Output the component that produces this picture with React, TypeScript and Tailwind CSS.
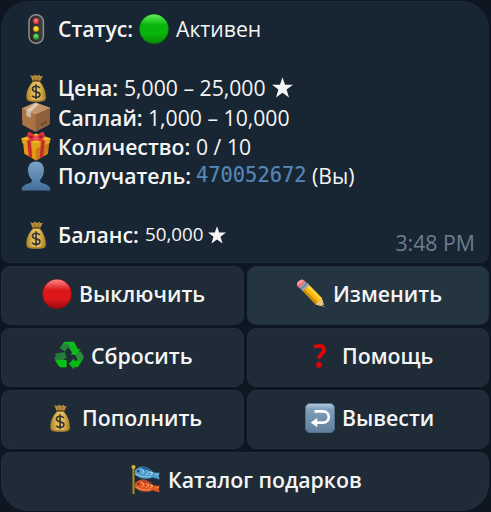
import type { ReactNode } from "react";

function TrafficLight() {
  return (
    <svg width="30" height="30" viewBox="0 0 30 30">
      <defs>
        <linearGradient id="tl" x1="0" x2="1"><stop offset="0" stopColor="#242424" /><stop offset="1" stopColor="#424242" /></linearGradient>
      </defs>
      <rect x="8" y="0.7" width="14.4" height="28.6" rx="7" fill="url(#tl)" stroke="#8e8e8e" strokeWidth="1.5" />
      <circle cx="15" cy="7" r="2.9" fill="#e94048" /><circle cx="15" cy="6.4" r="1.3" fill="#ff8086" />
      <circle cx="15" cy="14.8" r="2.9" fill="#f3b800" /><circle cx="15" cy="14.2" r="1.3" fill="#ffe16b" />
      <circle cx="15" cy="22.5" r="2.9" fill="#2eb23a" /><circle cx="15" cy="21.9" r="1.3" fill="#78df72" />
    </svg>
  );
}

function Ball({ id, stops }: { id: string; stops: [string, string, string] }) {
  return (
    <svg width="30" height="30" viewBox="0 0 30 30">
      <defs>
        <linearGradient id={id} x1="0" y1="0" x2="0" y2="1">
          <stop offset="0" stopColor={stops[0]} /><stop offset="0.38" stopColor={stops[1]} /><stop offset="0.68" stopColor={stops[1]} /><stop offset="1" stopColor={stops[2]} />
        </linearGradient>
      </defs>
      <circle cx="15" cy="15" r="14.7" fill={stops[2]} />
      <ellipse cx="15" cy="14.7" rx="13.9" ry="14.1" fill={`url(#${id})`} />
    </svg>
  );
}

function MoneyBag() {
  return (
    <svg width="30" height="30" viewBox="0 0 30 30">
      <defs>
        <linearGradient id="bag" x1="0" x2="1">
          <stop offset="0" stopColor="#a67c22" /><stop offset="0.3" stopColor="#dfb54f" /><stop offset="0.6" stopColor="#e8c365" /><stop offset="1" stopColor="#a97a1c" />
        </linearGradient>
      </defs>
      <path d="M9.2 2.3 12.4 3 14 1.5 16 3 18.4 1.7 19.5 3.2 21.9 2.8 19 8.6H12Z" fill="#b88c3c" />
      <path d="m13.3 3.6.8 4.3M17.7 3.4l-.9 4.5" stroke="#7e5b20" strokeWidth=".7" />
      <path d="M12 8.7c-3.6 3.1-6.4 8.6-6.7 14.2-.1 3 .8 5 3.2 5.3 4 .5 9.6.5 13.5 0 2.2-.3 3-2.3 2.9-5-.3-5.4-2.8-11.3-6.2-14.5Z" fill="url(#bag)" />
      <path d="M6 25.7c5 1.7 13.4 1.8 18.4 0-.5 1.6-1.1 2.2-2.3 2.4-4.3.5-9.4.5-13.7 0-1.3-.3-2-.9-2.4-2.4Z" fill="#a47921" opacity=".75" />
      <path d="M11.7 8.1q3.6-1.3 7.2 0" fill="none" stroke="#73521b" strokeWidth="1.3" strokeLinecap="round" />
      <path d="M18.8 14.9c-1-1.2-2.1-1.6-3.7-1.6-2.2 0-3.6 1-3.6 2.7 0 4 7.4 1.7 7.4 5.6 0 1.8-1.4 2.9-3.8 2.9-1.7 0-3-.5-4.1-1.7M15.1 11.2v15.1" fill="none" stroke="#343332" strokeWidth="1.6" />
    </svg>
  );
}

function Package() {
  return (
    <svg width="30" height="30" viewBox="0 0 30 30">
      <path d="M1 6.2 14.6.5 29 5.7 28.4 22.4 14.5 29.8 1.6 22.8Z" fill="#b88255" />
      <path d="M1 6.2 14.3 12.4 14.5 29.8 1.6 22.8Z" fill="#a97345" />
      <path d="M14.3 12.4 29 5.7 28.4 22.4 14.5 29.8Z" fill="#8f6039" />
      <path d="M1 6.2 14.6.5 29 5.7 14.3 12.4Z" fill="#c59468" />
      <path d="M7.3 3.7 10.4 2.4 17.8 10.8V16l-3.4 1.6v-5.2Z" fill="none" />
      <path d="M14.3 1.1 18 2 9.6 9.9v5.8l-4-2V8Z" fill="#decbb7" />
      <path d="m5.6 8 4 1.9v5.8l-4-2Z" fill="#cbb59e" />
      <path d="m20.1 21.2 2.2-1.1v2.8l-2.2 1.1Zm3.5-1.8 2-1v2.8l-2 1Z" fill="#664327" />
    </svg>
  );
}

function Gift() {
  return (
    <svg width="30" height="30" viewBox="1 0 30 30">
      <path d="M3 10.3 16 15.1 29 10.3 27.9 22.7 16 29.6 4.3 22.7Z" fill="#e49a14" />
      <path d="M16 14v15.6l11.9-6.9L29 10Z" fill="#c97d14" />
      <path d="m1.4 7.2 14.6-4.8 14.6 4.8-1.1 4.7L16 17.2 2.5 11.9Z" fill="#f1b920" />
      <path d="m1.4 7.2 14.6 5.3 14.6-5.3-1.1 4.7L16 17.2 2.5 11.9Z" fill="#dfa31a" />
      <path d="m7 9.2 4 1.5 1.3 16.8-3.5-2.1Zm18 0-4 1.5-1.3 16.8 3.5-2.1Z" fill="#cb2931" />
      <path d="m7 9.2 17-5 2 .7L11 10.7Zm18 0L8 4.6l-2 .7 15 5.4Z" fill="#d9363d" />
      <path d="M15.8 6.8C13.5 2.1 10 0 8.1 1.3 6.9 3 7.6 6.8 9 8.3c2 .9 5.4-.2 6.8-1.5Z" fill="#dd333d" />
      <path d="M16.2 6.8C18.5 2.1 22 0 23.9 1.3c1.2 1.7.5 5.5-.9 7-2 .9-5.4-.2-6.8-1.5Z" fill="#dd333d" />
      <path d="M14 6.2C11.7 4.5 9.8 4 9.2 5c-.2 1.3.5 2.3 1.5 2.1Zm4 0C20.3 4.5 22.2 4 22.8 5c.2 1.3-.5 2.3-1.5 2.1Z" fill="#9f1d2b" />
      <rect x="13.6" y="4.8" width="4.9" height="4.7" rx="1.6" fill="#f04b52" />
    </svg>
  );
}

function Person() {
  return (
    <svg width="30" height="30" viewBox="0 0 30 30">
      <defs><linearGradient id="person" x1="0" y1="0" x2="0" y2="1"><stop offset="0" stopColor="#7ba3c8" /><stop offset="1" stopColor="#426f99" /></linearGradient></defs>
      <path d="M15 .5c-5.5 0-8.4 4-7.9 9.4.2 3.9 1.6 6.6 3.5 8.5.8 2.1-.2 3-2.1 3.8C3.6 23.6.8 24.8.5 29.5h29c-.3-4.7-3.1-5.9-8-7.3-1.9-.8-2.9-1.7-2.1-3.8 1.9-1.9 3.3-4.6 3.5-8.5C23.4 4.5 20.5.5 15 .5Z" fill="url(#person)" />
    </svg>
  );
}

function Star({ size }: { size: number }) {
  return (
    <svg width={size} height={size} viewBox="0 0 20 20"><path d="m10 .3 2.4 7H20l-6.1 4.6 2.3 7.6L10 15l-6.2 4.5 2.3-7.6L0 7.3h7.6Z" fill="#f5f5f5" /></svg>
  );
}

function Pencil() {
  return (
    <svg width="30" height="30" viewBox="0 0 30 30">
      <path d="m11 4.1 14.8 15 2.6 8.7-8.7-2.4L4.7 9.8Z" fill="#f4b80b" />
      <path d="m11 4.1 14.8 15-2 1.8L9 6Z" fill="#ffd43d" />
      <path d="M6.4 8.2 21.4 23.6l-1.7 1.8L4.7 9.8Z" fill="#cc8a0a" />
      <path d="m25.8 19.1 2.6 8.7-8.7-2.4Z" fill="#e7c58e" />
      <path d="m27.6 25.3.8 2.5-2.6-.8Z" fill="#453e38" />
      <path d="m9 2.2 4 4-6.2 5.8-4-4Z" fill="#8fa3b5" />
      <path d="m11 4.2-6.2 5.8" stroke="#56697f" strokeWidth=".9" />
      <path d="M9.5 2.7 7.7 1.1C5-.9-.6 3.9 1.2 7l2 2Z" fill="#e9727b" />
      <path d="M7.5 1.2C5-.5.8 3.3 1 5.5 3 5.5 6.5 3.5 7.5 1.2Z" fill="#f59fa2" />
    </svg>
  );
}

function Recycle() {
  return (
    <svg width="30" height="30" viewBox="0 0 30 30">
      <path d="M7 6.2 9.3 2q.8-1.2 2.3-1.2h8.3l4.3 7.6 2-1-2.4 7.1-7.7-1.2 2.2-1.3L13.8 5 11 10.1 5.6 7Z" fill="#12b91c" />
      <path d="m5.9 7 1.6-2.5L12.7 2l2.8 2.8-4.4 6Z" fill="#28833a" />
      <path d="m3.2 12.2 7.6-1.2 2.4 7-2-1-4 6.8H3.6L.8 18.5q-.6-1.2.1-2.4l1.3-2.2-1.9-.9Z" fill="#247d36" />
      <path d="m1.2 18.8 6 .1h5.5v7.3H7.1q-1.7 0-2.5-1.3Z" fill="#09bf13" />
      <path d="m21.2 13.7 5.4-3.1 2.6 4.5q.7 1.2 0 2.4l-4.5 7.5q-.8 1.3-2.3 1.3h-2.5v2.2l-5-5.7 5-5.6v2.4h4.1Z" fill="#08b612" />
      <path d="m21.2 13.7 5.4-3.1 2.6 4.5q.7 1.2 0 2.4l-1 1.8-5-2.2Z" fill="#2c8b3d" />
    </svg>
  );
}

function Question() {
  return (
    <svg width="30" height="30" viewBox="0 0 30 30"><path d="M9.2 6.2c1.4-1 3-1.3 4.9-1.3 3.2 0 4.9 1.4 4.9 3.8 0 4-5.2 4.7-4.7 9" fill="none" stroke="#df0709" strokeWidth="3.9" /><circle cx="14" cy="23.8" r="2.9" fill="#df0709" /></svg>
  );
}

function ReturnArrow() {
  return (
    <svg width="30" height="30" viewBox="0 0 30 30">
      <defs><linearGradient id="key" x1="0" y1="0" x2="0" y2="1"><stop offset="0" stopColor="#b5cce0" /><stop offset=".2" stopColor="#809fbb" /><stop offset="1" stopColor="#607f9d" /></linearGradient></defs>
      <rect x=".5" y=".5" width="29" height="29" rx="4.5" fill="url(#key)" stroke="#536f8b" />
      <path d="M9.5 8.4H18c7.7 0 7.7 11.2 0 11.2h-7" fill="none" stroke="white" strokeWidth="2.6" />
      <path d="m5.7 19.6 6.5-4.7v9.4Z" fill="white" />
    </svg>
  );
}

function FishFlags() {
  return (
    <svg width="30" height="30" viewBox="0 0 30 30">
      <path d="M2.5 2v27" stroke="#af8a1c" strokeWidth="2" /><circle cx="2.5" cy="2" r="2" fill="#dfb42d" />
      <path d="M4 5 8 2.2q7-2.6 14.5 5.2l6.3.4-1.1 3 1 3.8-6.9-2Q15 15 9 12.8L4 10Z" fill="#4b9dce" />
      <path d="m9 2 5-.2 6.5 4-4 1Z" fill="#2c5c96" />
      <path d="m10 4 3 2-2 3m4-4 3 2-3 3m4-3 3 1-3 2" fill="none" stroke="#a6ddeb" strokeWidth="1" />
      <path d="M5 8.9q6 3.8 15 2.5m4-1.5 4-.4" fill="none" stroke="#87bfd4" strokeWidth="1.2" /><circle cx="7.2" cy="6.2" r="1.1" fill="#153453" />
      <path d="M4 18 8 15.2q7-2.6 14.5 5.2l6.3.4-1.1 3 1 3.8-6.9-2Q15 28 9 25.8L4 23Z" fill="#df5423" />
      <path d="m9 15 5-.2 6.5 4-4 1Z" fill="#b8452a" />
      <path d="m10 17 3 2-2 3m4-4 3 2-3 3m4-3 3 1-3 2" fill="none" stroke="#ffb064" strokeWidth="1" />
      <path d="M5 21.9q6 3.8 15 2.5m4-1.5 4-.4" fill="none" stroke="#f18a4c" strokeWidth="1.2" /><circle cx="7.2" cy="19.2" r="1.1" fill="#702b1a" />
    </svg>
  );
}

function Line({ icon, children }: { icon: ReactNode; children: ReactNode }) {
  return (
    <div className="flex h-[29.4px] items-center whitespace-nowrap">
      <span className="flex w-[37px] shrink-0 justify-start"><span className="-mr-2 flex w-[30px] shrink-0 justify-center">{icon}</span></span>
      {children}
    </div>
  );
}

function Label({ children, className }: { children: string; className: string }) {
  return <b className={`shrink-0 font-semibold ${className}`}>{children}</b>;
}

function Button({ icon, label, className = "bg-[#1f2c38]", pad }: { icon: ReactNode; label: string; className?: string; pad: string }) {
  return (
    <button className={`flex h-[59px] items-center gap-[7px] rounded-[9px] border border-[#20303d] pb-[3px] text-[21.3px] font-semibold whitespace-nowrap ${pad} ${className}`}>
      <span className="flex w-[30px] shrink-0 justify-center">{icon}</span>
      <span className="pb-[2px]">{label}</span>
    </button>
  );
}

export default function App() {
  return (
    <main className="h-[512px] w-[491px] overflow-hidden bg-[#0e1621] pt-px pr-[2px] pl-px font-['Open_Sans','Noto_Sans',sans-serif] text-[21.2px] leading-[29px] text-[#f5f5f5]">
      <section className="flex h-[262px] rounded-t-[27px] rounded-b-[8px] border border-[#1a2835] bg-[#182533] pt-[12.2px] pl-[19px]">
        <div className="w-[360px]">
          <Line icon={<TrafficLight />}>
            <Label className="w-[81px]">Статус:</Label>
            <span className="mr-[7px]"><Ball id="green" stops={["#62ec59", "#08b50b", "#078d08"]} /></span>
            <span>Активен</span>
          </Line>
          <div className="h-[29.4px]" />
          <Line icon={<MoneyBag />}><Label className="w-[66px]">Цена:</Label><span className="w-[148px]">5,000 – 25,000</span><Star size={21} /></Line>
          <Line icon={<Package />}><Label className="w-[90px]">Саплай:</Label><span>1,000 – 10,000</span></Line>
          <Line icon={<Gift />}><Label className="w-[138px]">Количество:</Label><span>0 / 10</span></Line>
          <Line icon={<Person />}>
            <Label className="w-[138px]">Получатель:</Label>
            <span className="w-[116px] font-['DejaVu_Sans_Mono',monospace] text-[20.4px] text-[#5587b7] [-webkit-text-stroke:0.2px_#5587b7]">470052672</span>
            <span>(Вы)</span>
          </Line>
          <div className="h-[29.4px]" />
          <Line icon={<MoneyBag />}><Label className="w-[87px]">Баланс:</Label><span className="w-[63px] text-[18.8px]">50,000</span><Star size={18} /></Line>
        </div>
        <time className="mr-[13px] mb-[5px] ml-auto self-end text-[21.3px] whitespace-nowrap text-[#6c7d8e]">3:48 PM</time>
      </section>
      <nav className="mt-[3px] grid grid-cols-[243px_242px] gap-[3px]">
        <Button icon={<Ball id="red" stops={["#ff8683", "#db171a", "#a40a0e"]} />} label="Выключить" pad="pl-[40px]" />
        <Button icon={<Pencil />} label="Изменить" pad="pl-[48px]" className="bg-[#243441]" />
        <Button icon={<Recycle />} label="Сбросить" pad="pl-[52px]" />
        <Button icon={<Question />} label="Помощь" pad="pl-[57px]" />
        <Button icon={<MoneyBag />} label="Пополнить" pad="pl-[43px]" />
        <Button icon={<ReturnArrow />} label="Вывести" pad="pl-[57px]" />
        <Button icon={<FishFlags />} label="Каталог подарков" pad="pl-[129px]" className="col-span-2 rounded-b-[27px] bg-[#1f2c38]" />
      </nav>
    </main>
  );
}
